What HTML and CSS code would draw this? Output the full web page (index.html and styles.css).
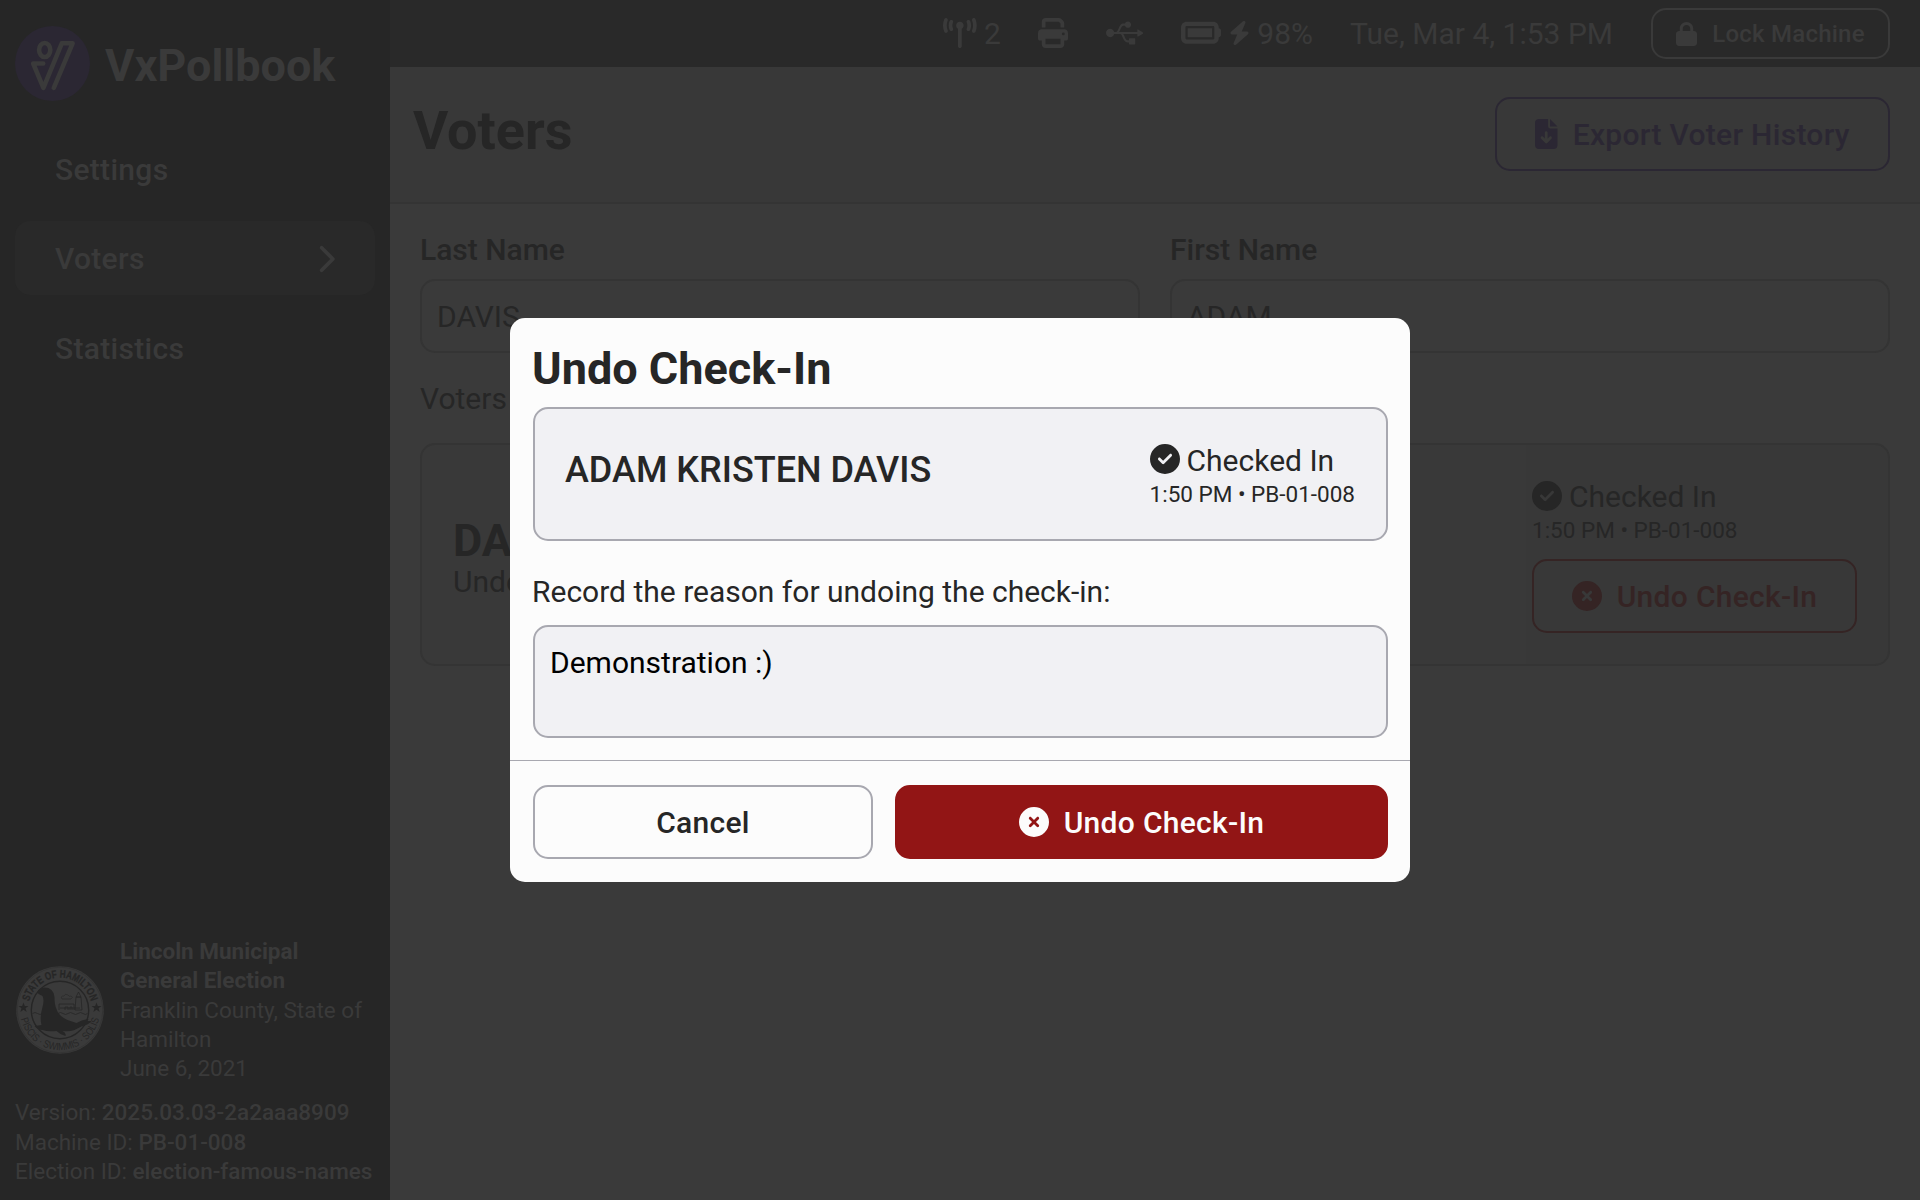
FILE: index.html
```html
<!DOCTYPE html>
<html lang="en">
<head>
<meta charset="utf-8">
<title>VxPollbook</title>
<link rel="stylesheet" href="styles.css">
</head>
<body>
<svg class="defs" width="0" height="0" aria-hidden="true">
  <symbol id="check" viewBox="0 0 512 512"><path d="M256 512A256 256 0 1 0 256 0a256 256 0 1 0 0 512zM369 209L241 337c-9.4 9.4-24.6 9.4-33.9 0l-64-64c-9.4-9.4-9.4-24.6 0-33.9s24.6-9.4 33.9 0l47 47L335 175c9.4-9.4 24.6-9.4 33.9 0s9.4 24.6 0 33.9z"/></symbol>
  <symbol id="xmark" viewBox="0 0 512 512"><path d="M256 512A256 256 0 1 0 256 0a256 256 0 1 0 0 512zM175 175c9.4-9.4 24.6-9.4 33.9 0l47 47 47-47c9.4-9.4 24.6-9.4 33.9 0s9.4 24.6 0 33.9l-47 47 47 47c9.4 9.4 9.4 24.6 0 33.9s-24.6 9.4-33.9 0l-47-47-47 47c-9.4 9.4-24.6 9.4-33.9 0s-9.4-24.6 0-33.9l47-47-47-47c-9.4-9.4-9.4-24.6 0-33.9z"/></symbol>
</svg>
<div class="app">
  <aside class="sidebar">
    <div class="brand">
      <svg class="logo" viewBox="0 0 75 75">
        <circle cx="37.5" cy="37.5" r="37.5" fill="#2b2733"/>
        <g fill="none" stroke="#3a3a3a" stroke-width="4.6" stroke-linecap="round" stroke-linejoin="round">
          <ellipse cx="29.7" cy="24" rx="5.6" ry="7"/>
          <path d="M28.2 37.5H18.2L28.4 61.8L46.8 17.3H57.6L38.8 61.8"/>
        </g>
      </svg>
      <span class="brand-name">VxPollbook</span>
    </div>
    <nav class="nav">
      <a class="nav-item">Settings</a>
      <a class="nav-item active">Voters
        <svg width="18.75" height="30" viewBox="0 0 320 512"><path d="M310.6 233.4c12.5 12.5 12.5 32.8 0 45.3l-192 192c-12.5 12.5-32.8 12.5-45.3 0s-12.5-32.8 0-45.3L242.7 256 73.4 86.6c-12.5-12.5-12.5-32.8 0-45.3s32.8-12.5 45.3 0l192 192z"/></svg>
      </a>
      <a class="nav-item">Statistics</a>
    </nav>
    <div class="election">
      <svg class="seal" viewBox="0 0 90 90">
        <defs>
          <path id="arc-top" d="M15.100 56A32 32 0 1 1 74.900 56"/>
          <path id="arc-bottom" d="M4.900 45A40.100 40.100 0 0 0 85.100 45"/>
        </defs>
        <circle cx="45" cy="45" r="43.800" fill="#3a3a3a"/>
        <circle cx="45" cy="45" r="42.800" fill="none" stroke="#262626" stroke-width=".3"/>
        <circle cx="45" cy="45" r="28.7" fill="none" stroke="#262626" stroke-width="1.4"/>
        <g fill="none" stroke="#262626" stroke-width=".8">
          <path d="M17.5 48.5q2.5-2 5 0t5 0M38 48.5q2.5 2 5 0t5 0 5 0 5 0 5 0 5 0 4.500 0"/>
          <path d="M44 45v-6h15v6M60 45l1-13h5l1 13zM61 32l2.500-5 2.500 5zM45 43h20M50 45v-3h3v3M55 45v-3h2v3"/>
          <path d="M47 34h9q3-2 0-3-2 1-3-1-3-2-4 1-4 0-2 3z" stroke-width=".6"/>
        </g>
        <path fill="#262626" d="M22.500 27q1-4 7-4.500 9 0 10 9.500 0 8 2 12 2 7 11 11l9 3q5-3 11-4l1 0-1 2h4q-3 4-9 5l-8 4q-5 2-12 1 4 2 3 5-5-1-9-5-9 1-14-1-5 0-8-4l7-1q-2-8 1-18 2-7 0-11l-4-2z"/>
        <path fill="#262626" d="M8.500 37.500l1.300 3.500h3.700l-3 2.300 1.200 3.700-3.200-2.200-3.200 2.200 1.200-3.700-3-2.300h3.700zM81.500 37.500l1.300 3.500h3.700l-3 2.300 1.200 3.700-3.200-2.200-3.200 2.200 1.200-3.700-3-2.300h3.700z"/>
        <g fill="#262626">
          <text class="seal-top" text-anchor="middle" textLength="84" lengthAdjust="spacingAndGlyphs"><textPath href="#arc-top" startOffset="50%" textLength="84" lengthAdjust="spacingAndGlyphs">STATE OF HAMILTON</textPath></text>
          <text class="seal-bottom" text-anchor="middle" textLength="108" lengthAdjust="spacingAndGlyphs"><textPath href="#arc-bottom" startOffset="50%" textLength="108" lengthAdjust="spacingAndGlyphs">PISCIS · SWIMMIS · SOLIS</textPath></text>
        </g>
      </svg>
      <div class="election-text"><b>Lincoln Municipal General Election</b><br>Franklin County, State of Hamilton<br>June 6, 2021</div>
    </div>
    <div class="meta">
      <div>Version: <b>2025.03.03-2a2aaa8909</b></div>
      <div>Machine ID: <b>PB-01-008</b></div>
      <div>Election ID: <b>election-famous-names</b></div>
    </div>
  </aside>
  <main class="main">
    <div class="toolbar">
      <div class="status network">
        <svg width="33.75" height="30" viewBox="0 0 576 512"><path d="M80.3 44C69.8 69.900 64 98.200 64 128s5.800 58.100 16.300 84c6.600 16.400-1.300 35-17.700 41.700s-35-1.300-41.700-17.700C7.400 202.600 0 166.100 0 128S7.400 53.400 20.900 20C27.600 3.600 46.200-4.300 62.600 2.300S86.900 27.600 80.300 44zM555.100 20C568.600 53.400 576 89.900 576 128s-7.400 74.600-20.900 108c-6.600 16.400-25.300 24.300-41.700 17.700S489.100 228.400 495.700 212c10.500-25.900 16.300-54.200 16.300-84s-5.800-58.100-16.300-84C489.100 27.600 497 9 513.400 2.300s35 1.300 41.700 17.700zM352 128c0 23.700-12.900 44.400-32 55.400V480c0 17.700-14.300 32-32 32s-32-14.300-32-32V183.400c-19.100-11.100-32-31.700-32-55.400c0-35.300 28.700-64 64-64s64 28.700 64 64zM170.600 76.800C163.800 92.400 160 109.700 160 128s3.800 35.600 10.600 51.200c7.100 16.200-.3 35.100-16.500 42.100s-35.100-.3-42.100-16.500c-10.300-23.600-16-49.600-16-76.800s5.700-53.200 16-76.800c7.100-16.200 25.900-23.600 42.100-16.500s23.600 25.900 16.500 42.100zM464 51.200c10.300 23.600 16 49.600 16 76.800s-5.700 53.200-16 76.800c-7.100 16.200-25.900 23.600-42.100 16.500s-23.600-25.900-16.500-42.100c6.800-15.600 10.600-32.900 10.600-51.200s-3.800-35.600-10.600-51.200c-7.100-16.200 .3-35.100 16.500-42.100s35.100 .3 42.100 16.500z"/></svg>
        <span>2</span>
      </div>
      <div class="status printer">
        <svg width="30" height="30" viewBox="0 0 512 512"><path d="M128 0C92.700 0 64 28.700 64 64v96h64V64H354.700L384 93.300V160h64V93.300c0-17-6.700-33.300-18.700-45.300L400 18.700C388 6.700 371.700 0 354.700 0H128zM384 352v32 64H128V384 368 352H384zm64 32h32c17.700 0 32-14.300 32-32V256c0-35.300-28.700-64-64-64H64c-35.300 0-64 28.700-64 64v96c0 17.700 14.300 32 32 32H64v64c0 35.300 28.700 64 64 64H384c35.300 0 64-28.700 64-64V384zM432 248a24 24 0 1 1 0 48 24 24 0 1 1 0-48z"/></svg>
      </div>
      <div class="status usb">
        <svg width="37.5" height="30" viewBox="0 0 640 512"><path d="M641.500 256c0 3.100-1.700 6.100-4.500 7.500L547.900 317c-1.400.8-2.800 1.400-4.500 1.400-1.400 0-3.100-.3-4.500-1.100-2.800-1.700-4.500-4.500-4.500-7.800v-35.600H295.700c25.300 39.600 40.500 106.900 69.600 106.900H392V354c0-5 3.900-8.900 8.900-8.900H490c5 0 8.900 3.900 8.900 8.900v89.100c0 5-3.900 8.900-8.900 8.900h-89.100c-5 0-8.900-3.900-8.900-8.900v-26.700h-26.700c-75.400 0-81.100-142.500-124.700-142.500H140.300c-8.100 30.600-35.900 53.500-69 53.500C32 327.300 0 295.300 0 256s32-71.300 71.300-71.300c33.100 0 61 22.800 69 53.500 39.100 0 43.900 9.500 74.600-60.400C255 88.700 273 95.700 323.800 95.700c7.500-20.900 27-35.600 50.400-35.600 29.500 0 53.500 23.900 53.500 53.500s-23.900 53.500-53.500 53.500c-23.400 0-42.900-14.800-50.400-35.600H294c-29.100 0-44.300 67.400-69.600 106.900h310.100v-35.600c0-3.300 1.700-6.100 4.500-7.800 2.800-1.700 6.400-1.400 8.900.3l89.100 53.500c2.800 1.100 4.500 4.100 4.500 7.200z"/></svg>
      </div>
      <div class="status battery">
        <svg width="40" height="35.5" viewBox="0 0 576 512"><path d="M464 160c8.800 0 16 7.200 16 16V336c0 8.800-7.200 16-16 16H80c-8.800 0-16-7.200-16-16V176c0-8.800 7.200-16 16-16H464zM80 96C35.800 96 0 131.800 0 176V336c0 44.200 35.800 80 80 80H464c44.200 0 80-35.800 80-80V320c17.700 0 32-14.300 32-32V224c0-17.700-14.300-32-32-32V176c0-44.200-35.800-80-80-80H80zM448 192H96V320H448V192z"/></svg>
        <svg class="bolt" width="21" height="24" viewBox="0 0 448 512"><path d="M349.400 44.600c5.900-13.700 1.500-29.700-10.600-38.500s-28.600-8-39.900 1.800l-256 224c-10 8.800-13.600 22.900-8.900 35.300S50.700 288 64 288H175.500L98.600 467.400c-5.900 13.700-1.500 29.700 10.600 38.500s28.600 8 39.900-1.800l256-224c10-8.800 13.600-22.900 8.900-35.300s-16.600-20.700-30-20.700H272.500L349.400 44.600z"/></svg>
        <span>98%</span>
      </div>
      <div class="clock">Tue, Mar 4, 1:53 PM</div>
      <button class="btn lock">
        <svg width="21" height="24" viewBox="0 0 448 512"><path d="M144 144v48H304V144c0-44.200-35.800-80-80-80s-80 35.800-80 80zM80 192V144C80 64.500 144.500 0 224 0s144 64.500 144 144v48h16c35.300 0 64 28.700 64 64V448c0 35.300-28.700 64-64 64H64c-35.300 0-64-28.700-64-64V256c0-35.300 28.700-64 64-64H80z"/></svg>
        <span>Lock Machine</span>
      </button>
    </div>
    <header class="header">
      <h1>Voters</h1>
      <button class="btn export">
        <svg width="22.5" height="30" viewBox="0 0 384 512"><path d="M64 0C28.700 0 0 28.700 0 64V448c0 35.300 28.700 64 64 64H320c35.300 0 64-28.700 64-64V160H256c-17.700 0-32-14.300-32-32V0H64zM256 0V128H384L256 0zM216 232V334.100l31-31c9.400-9.400 24.600-9.400 33.900 0s9.400 24.600 0 33.900l-72 72c-9.400 9.400-24.600 9.400-33.900 0l-72-72c-9.400-9.400-9.400-24.600 0-33.900s24.600-9.400 33.900 0l31 31V232c0-13.300 10.700-24 24-24s24 10.700 24 24z"/></svg>
        <span>Export Voter History</span>
      </button>
    </header>
    <section class="content">
      <div class="fields">
        <div class="field"><div class="label">Last Name</div><div class="input">DAVIS</div></div>
        <div class="field"><div class="label">First Name</div><div class="input">ADAM</div></div>
      </div>
      <div class="count">Voters</div>
      <div class="card">
        <div class="voter">
          <div class="voter-name">DAVIS</div>
          <div>Undeclared</div>
        </div>
        <div class="voter-status">
          <div class="checked"><svg width="30" height="30"><use href="#check"/></svg>Checked In</div>
          <div class="when">1:50 PM • PB-01-008</div>
          <button class="btn undo-outline"><svg width="30" height="30"><use href="#xmark"/></svg><span>Undo Check-In</span></button>
        </div>
      </div>
    </section>
  </main>
</div>
<div class="overlay">
  <div class="modal">
    <div class="modal-body">
      <h2>Undo Check-In</h2>
      <div class="summary">
        <div class="summary-name">ADAM KRISTEN DAVIS</div>
        <div class="summary-status">
          <div class="checked"><svg width="30" height="30"><use href="#check"/></svg>Checked In</div>
          <div class="when">1:50 PM • PB-01-008</div>
        </div>
      </div>
      <div class="prompt">Record the reason for undoing the check-in:</div>
      <textarea class="reason">Demonstration :)</textarea>
    </div>
    <div class="modal-actions">
      <button class="btn cancel"><span>Cancel</span></button>
      <button class="btn danger"><svg width="30" height="30"><use href="#xmark"/></svg><span>Undo Check-In</span></button>
    </div>
  </div>
</div>
</body>
</html>
```
FILE: styles.css
```css
* { box-sizing: border-box; }
body {
  margin: 0;
  width: 1920px;
  height: 1200px;
  overflow: hidden;
  background: #3a3a3a;
  color: #262626;
  font: 400 30px/1.2 Roboto, sans-serif;
}
svg { fill: currentColor; flex: none; display: block; }
.defs { position: absolute; }
b { font-weight: 700; }
h1, h2 { margin: 0; font-weight: 700; }
.app { display: flex; height: 1200px; }

.sidebar {
  width: 390px;
  flex: none;
  background: #262626;
  color: #3a3a3a;
  display: flex;
  flex-direction: column;
}
.brand { display: flex; align-items: center; gap: 15px; padding: 26px 15px 0; }
.logo { width: 75px; height: 75px; }
.brand-name { font-size: 45px; font-weight: 700; line-height: 54px; padding-top: 5px; }
.nav { display: flex; flex-direction: column; gap: 15px; padding: 30px 15px 0; }
.nav-item {
  display: flex;
  align-items: center;
  justify-content: space-between;
  height: 74.5px;
  padding: 3px 40px 0 40px;
  border-radius: 15px;
  font-weight: 500;
  letter-spacing: 0.01em;
}
.nav-item.active { background: #292929; padding-top: 2px; }
.election { margin-top: auto; display: flex; align-items: center; gap: 15px; padding: 0 15px; font-size: 22.5px; line-height: 29.25px; }
.seal { width: 90px; height: 90px; margin-bottom: 1px; }
.seal-top { font: 700 11px "Liberation Sans", sans-serif; stroke: #262626; stroke-width: 0.3px; }
.seal-bottom { font: 400 10.5px "Liberation Sans", sans-serif; }
.meta { padding: 15px 15px 14px; font-size: 22.5px; line-height: 29.25px; white-space: nowrap; }
.meta b { font-weight: 500; }

.main { flex: 1; display: flex; flex-direction: column; }
.toolbar {
  height: 67px;
  background: #292929;
  color: #3a3a3a;
  display: flex;
  align-items: center;
  justify-content: flex-end;
  padding-right: 30px;
}
.status { display: flex; align-items: center; }
.status svg { margin-bottom: 1px; }
.network { gap: 7px; margin-right: 37px; }
.printer, .usb { margin-right: 38px; }
.battery { margin-right: 37px; }
.status .bolt { margin: 0 7px 1px 8px; }
.clock { margin-right: 38px; }

.btn {
  display: flex;
  align-items: center;
  justify-content: center;
  gap: 15px;
  height: 74px;
  padding: 0;
  border: 2px solid;
  border-radius: 15px;
  background: none;
  color: inherit;
  font: 500 30px/36px Roboto, sans-serif;
  letter-spacing: 0.01em;
  white-space: nowrap;
}
.lock { width: 239px; height: 51px; font-size: 24px; }
.header {
  height: 137px;
  padding: 0 30px 2px 23px;
  background: #383838;
  border-bottom: 2px solid #343434;
  display: flex;
  align-items: center;
  justify-content: space-between;
}
.header h1 { font-size: 54px; line-height: 64px; padding-bottom: 6px; }
.export { color: #2b2733; width: 395px; }
.export span, .undo-outline span { padding-top: 2px; }

.content { padding: 28px 30px 0; }
.fields { display: flex; gap: 30px; }
.field { flex: 1; }
.label { font-weight: 500; line-height: 36px; margin-bottom: 11px; }
.input {
  height: 74px;
  border: 2px solid #343434;
  border-radius: 15px;
  padding: 0 15px;
  line-height: 72px;
}
.count { margin-top: 28px; line-height: 36px; }
.card {
  margin-top: 26px;
  height: 223px;
  border: 2px solid #343434;
  border-radius: 15px;
  background: linear-gradient(90deg, #393939 1104px, #383838 1104px);
  display: flex;
  align-items: center;
  justify-content: space-between;
  padding: 0 31px;
}
.voter { padding-top: 8px; }
.voter-name { font-size: 45px; font-weight: 700; line-height: 46px; }
.checked { display: flex; align-items: center; gap: 7px; line-height: 36px; }
.checked svg { margin-bottom: 3px; }
.when { font-size: 22.5px; line-height: 27px; padding-top: 2px; }
.voter-status { padding-top: 3px; }
.undo-outline { width: 325px; margin-top: 15px; color: #352424; }

.overlay { position: absolute; inset: 0; display: flex; align-items: center; justify-content: center; }
.modal { width: 900px; height: 564px; border-radius: 15px; background: #fcfcfc; }
.modal-body { height: 443px; padding: 24px 22px 0 23px; border-bottom: 1px solid #a8a8b0; }
.modal h2 { font-size: 45px; line-height: 54px; margin-left: -1px; }
.summary {
  height: 134px;
  margin-top: 11px;
  padding: 0 31px 0 30px;
  border: 2px solid #a8a8b0;
  border-radius: 15px;
  background: #f1f1f4;
  display: flex;
  align-items: center;
  justify-content: space-between;
}
.summary-name { font-size: 36px; font-weight: 500; padding-bottom: 6px; }
.summary-status { padding-top: 2px; }
.prompt { margin: 33px 0 15px -1px; line-height: 36px; }
.reason {
  display: block;
  width: 100%;
  height: 113px;
  padding: 18px 15px;
  border: 2px solid #a8a8b0;
  border-radius: 15px;
  background: #f1f1f4;
  color: #000;
  font: 400 30px/36px Roboto, sans-serif;
  overflow: hidden;
}
.reason::-webkit-resizer { background: none; }
.modal-actions { display: flex; gap: 22px; padding: 24px 22px 0 23px; }
.modal-actions .btn span { padding-top: 2px; }
.cancel { width: 340px; border-color: #a8a8b0; color: #262626; }
.danger { flex: 1; background: #921515; border-color: #921515; color: #fcfcfc; }
```
